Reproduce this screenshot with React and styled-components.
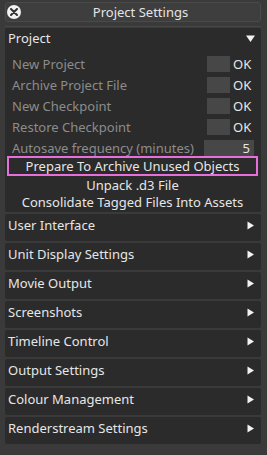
import React from "react";
import styled, { createGlobalStyle } from "styled-components";

const GlobalStyle = createGlobalStyle`
    html, body {
        margin: 0;
        padding: 0;
        background: #3a3a3a;
        font-family: "Noto Sans", "Open Sans", sans-serif;
    }
`;

const Window = styled.div`
    width: 267px;
    height: 455px;
    padding: 2px 6px 0 5px;
    box-sizing: border-box;
    display: flex;
    flex-direction: column;
`;

const TitleBar = styled.div`
    height: 20px;
    display: flex;
    align-items: center;
    background: #3e3e3e;
    border: 1px solid #4a4a4a;
    border-radius: 3px;
    box-sizing: border-box;
`;

const CloseButton = styled.div`
    width: 14px;
    height: 14px;
    border-radius: 50%;
    background: #f2f2f2;
    margin-left: 1px;
    display: flex;
    align-items: center;
    justify-content: center;
`;

const Title = styled.div`
    flex: 1;
    text-align: center;
    color: #e4e4e4;
    font-size: 13px;
`;

const Body = styled.div`
    margin-top: 4px;
    border-top: 1px solid #474747;
    padding-top: 1px;
    display: flex;
    flex-direction: column;
    gap: 2px;
`;

const Section = styled.div`
    background: #2b2b2b;
    border-radius: 2px;
    display: flex;
    flex-direction: column;
    padding-bottom: ${(p) => (p.open ? "2px" : "0")};
`;

const SectionHeader = styled.div`
    height: ${(p) => (p.open ? "22px" : "27px")};
    display: flex;
    align-items: center;
    justify-content: space-between;
    padding: 0 6px ${(p) => (p.open ? "2px" : "5px")} 3px;
    box-sizing: border-box;
    color: #e6e6e6;
    font-size: 13px;
`;

const Rows = styled.div`
    display: flex;
    flex-direction: column;
    padding: 3px 5px 0 7px;
`;

const Row = styled.div`
    height: 21px;
    display: flex;
    align-items: center;
    color: #8c8c8c;
    font-size: 13px;
`;

const Label = styled.span`
    flex: 1;
    white-space: nowrap;
`;

const Square = styled.div`
    width: 23px;
    height: 16px;
    background: #474747;
`;

const Ok = styled.span`
    width: 26px;
    padding-left: 3px;
    box-sizing: border-box;
    color: #e6e6e6;
    font-size: 13px;
`;

const NumberBox = styled.div`
    width: 50px;
    height: 16px;
    margin-right: 2px;
    background: #474747;
    color: #e6e6e6;
    text-align: right;
    padding-right: 4px;
    box-sizing: border-box;
    line-height: 16px;
    font-size: 13px;
`;

const ActionButton = styled.div`
    height: ${(p) => (p.highlight ? "20px" : "17px")};
    margin: ${(p) => (p.highlight ? "-2px 3px 0 2px" : "0 3px 0 2px")};
    border: ${(p) => (p.highlight ? "2px solid #e66fdc" : "2px solid transparent")};
    box-sizing: border-box;
    display: flex;
    align-items: center;
    justify-content: center;
    color: #e6e6e6;
    font-size: 13px;
    white-space: nowrap;
`;

const Arrow = ({ down }) => (
    <svg width="9" height="9" viewBox="0 0 9 9">
        {down ? (
            <polygon points="0,1.5 9,1.5 4.5,8" fill="#f2f2f2" />
        ) : (
            <polygon points="1.5,0.5 8,4.5 1.5,8.5" fill="#f2f2f2" />
        )}
    </svg>
);

const projectRows = [
    "New Project",
    "Archive Project File",
    "New Checkpoint",
    "Restore Checkpoint",
];

const collapsed = [
    "User Interface",
    "Unit Display Settings",
    "Movie Output",
    "Screenshots",
    "Timeline Control",
    "Output Settings",
    "Colour Management",
    "Renderstream Settings",
];

const App = () => {
    return (
        <>
            <GlobalStyle />
            <Window>
                <TitleBar>
                    <CloseButton>
                        <svg width="8" height="8" viewBox="0 0 8 8">
                            <path d="M1 1 L7 7 M7 1 L1 7" stroke="#333" strokeWidth="2" strokeLinecap="round" />
                        </svg>
                    </CloseButton>
                    <Title>Project Settings</Title>
                </TitleBar>
                <Body>
                    <Section open>
                        <SectionHeader open>
                            Project <Arrow down />
                        </SectionHeader>
                        <Rows>
                            {projectRows.map((r) => (
                                <Row key={r}>
                                    <Label>{r}</Label>
                                    <Square />
                                    <Ok>OK</Ok>
                                </Row>
                            ))}
                            <Row>
                                <Label>Autosave frequency (minutes)</Label>
                                <NumberBox>5</NumberBox>
                            </Row>
                        </Rows>
                        <ActionButton highlight>Prepare To Archive Unused Objects</ActionButton>
                        <ActionButton>Unpack .d3 File</ActionButton>
                        <ActionButton>Consolidate Tagged Files Into Assets</ActionButton>
                    </Section>
                    {collapsed.map((s) => (
                        <Section key={s}>
                            <SectionHeader>
                                {s} <Arrow />
                            </SectionHeader>
                        </Section>
                    ))}
                </Body>
            </Window>
        </>
    );
};

export default App;
